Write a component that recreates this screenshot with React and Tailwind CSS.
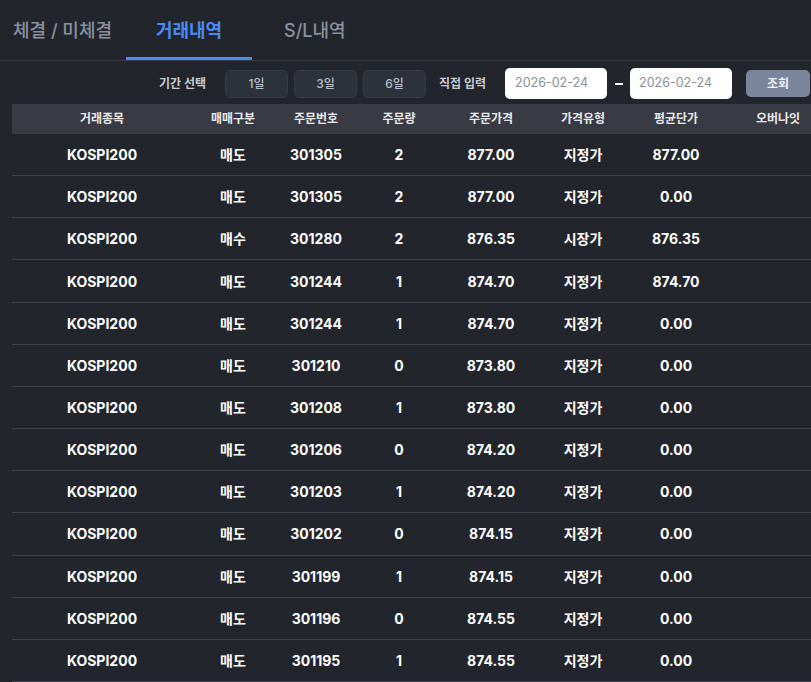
import React from "react";

const rows = [
  ["KOSPI200", "매도", "301305", "2", "877.00", "지정가", "877.00"],
  ["KOSPI200", "매도", "301305", "2", "877.00", "지정가", "0.00"],
  ["KOSPI200", "매수", "301280", "2", "876.35", "시장가", "876.35"],
  ["KOSPI200", "매도", "301244", "1", "874.70", "지정가", "874.70"],
  ["KOSPI200", "매도", "301244", "1", "874.70", "지정가", "0.00"],
  ["KOSPI200", "매도", "301210", "0", "873.80", "지정가", "0.00"],
  ["KOSPI200", "매도", "301208", "1", "873.80", "지정가", "0.00"],
  ["KOSPI200", "매도", "301206", "0", "874.20", "지정가", "0.00"],
  ["KOSPI200", "매도", "301203", "1", "874.20", "지정가", "0.00"],
  ["KOSPI200", "매도", "301202", "0", "874.15", "지정가", "0.00"],
  ["KOSPI200", "매도", "301199", "1", "874.15", "지정가", "0.00"],
  ["KOSPI200", "매도", "301196", "0", "874.55", "지정가", "0.00"],
  ["KOSPI200", "매도", "301195", "1", "874.55", "지정가", "0.00"],
];

const headers = ["거래종목", "매매구분", "주문번호", "주문량", "주문가격", "가격유형", "평균단가", "오버나잇"];
const widths = ["w-[180px]", "w-[82px]", "w-[84px]", "w-[82px]", "w-[102px]", "w-[82px]", "w-[104px]", "w-[100px]"];

export default function App() {
  return (
    <div
      className="w-[811px] h-[682px] overflow-hidden bg-[#22252c] text-white"
      style={{ fontFamily: "Inter, 'Noto Sans CJK KR', sans-serif" }}
    >
      {/* Tabs */}
      <div className="flex h-[61px] border-b border-[#3a3d46]">
        <div className="flex items-center pl-[13px] pr-[14px] text-[18px] font-medium text-[#8a919e]">체결 / 미체결</div>
        <div className="relative flex items-center justify-center w-[126px] text-[18px] font-bold text-[#4a8af4]">
          거래내역
          <div className="absolute left-0 right-0 bottom-0 h-[3px] bg-[#4a8af4]" />
        </div>
        <div className="flex items-center pl-[32px] text-[18px] font-medium text-[#8a919e]">S/L내역</div>
      </div>

      {/* Filter row */}
      <div className="flex items-center h-[43px] pt-[2px]">
        <div className="ml-[159px] text-[12px] font-bold text-[#c9ccd2]">기간 선택</div>
        <div className="flex gap-[6px] ml-[19px]">
          {["1일", "3일", "6일"].map((t) => (
            <div
              key={t}
              className="w-[63px] h-[28px] flex items-center justify-center rounded-[5px] bg-[#2c313a] border border-[#363b45] text-[12px] font-medium text-[#b8bec9]"
            >
              {t}
            </div>
          ))}
        </div>
        <div className="ml-[13px] text-[12px] font-bold text-[#c9ccd2]">직접 입력</div>
        <div className="ml-[19px] w-[102px] h-[31px] rounded-[5px] bg-white flex items-center pl-[10px] text-[12.5px] text-[#8a8f98]">2026-02-24</div>
        <div className="w-[23px] flex justify-center">
          <div className="w-[8px] h-[2px] bg-white" />
        </div>
        <div className="w-[102px] h-[31px] rounded-[5px] bg-white flex items-center pl-[9px] text-[12.5px] text-[#8a8f98]">2026-02-24</div>
        <div className="ml-[14px] w-[64px] h-[27px] rounded-[5px] bg-[#7a849a] flex items-center justify-center text-[12px] font-bold text-[#eef0f4]">조회</div>
      </div>

      {/* Table */}
      <div className="ml-[12px]">
        <div className="flex h-[30px] bg-[#383b43] w-[816px]">
          {headers.map((h, i) => (
            <div key={h} className={`${widths[i]} shrink-0 flex items-center justify-center text-[12px] font-bold text-[#e8eaee]`}>
              {h}
            </div>
          ))}
        </div>
        {rows.map((r, ri) => (
          <div key={ri} className="flex h-[42.17px] w-[816px] border-b border-[#3e414a]">
            {r.map((c, i) => (
              <div key={i} className={`${widths[i]} shrink-0 flex items-center justify-center text-[14px] font-bold text-white`}>
                {c}
              </div>
            ))}
            <div className={`${widths[7]} shrink-0`} />
          </div>
        ))}
      </div>
    </div>
  );
}
